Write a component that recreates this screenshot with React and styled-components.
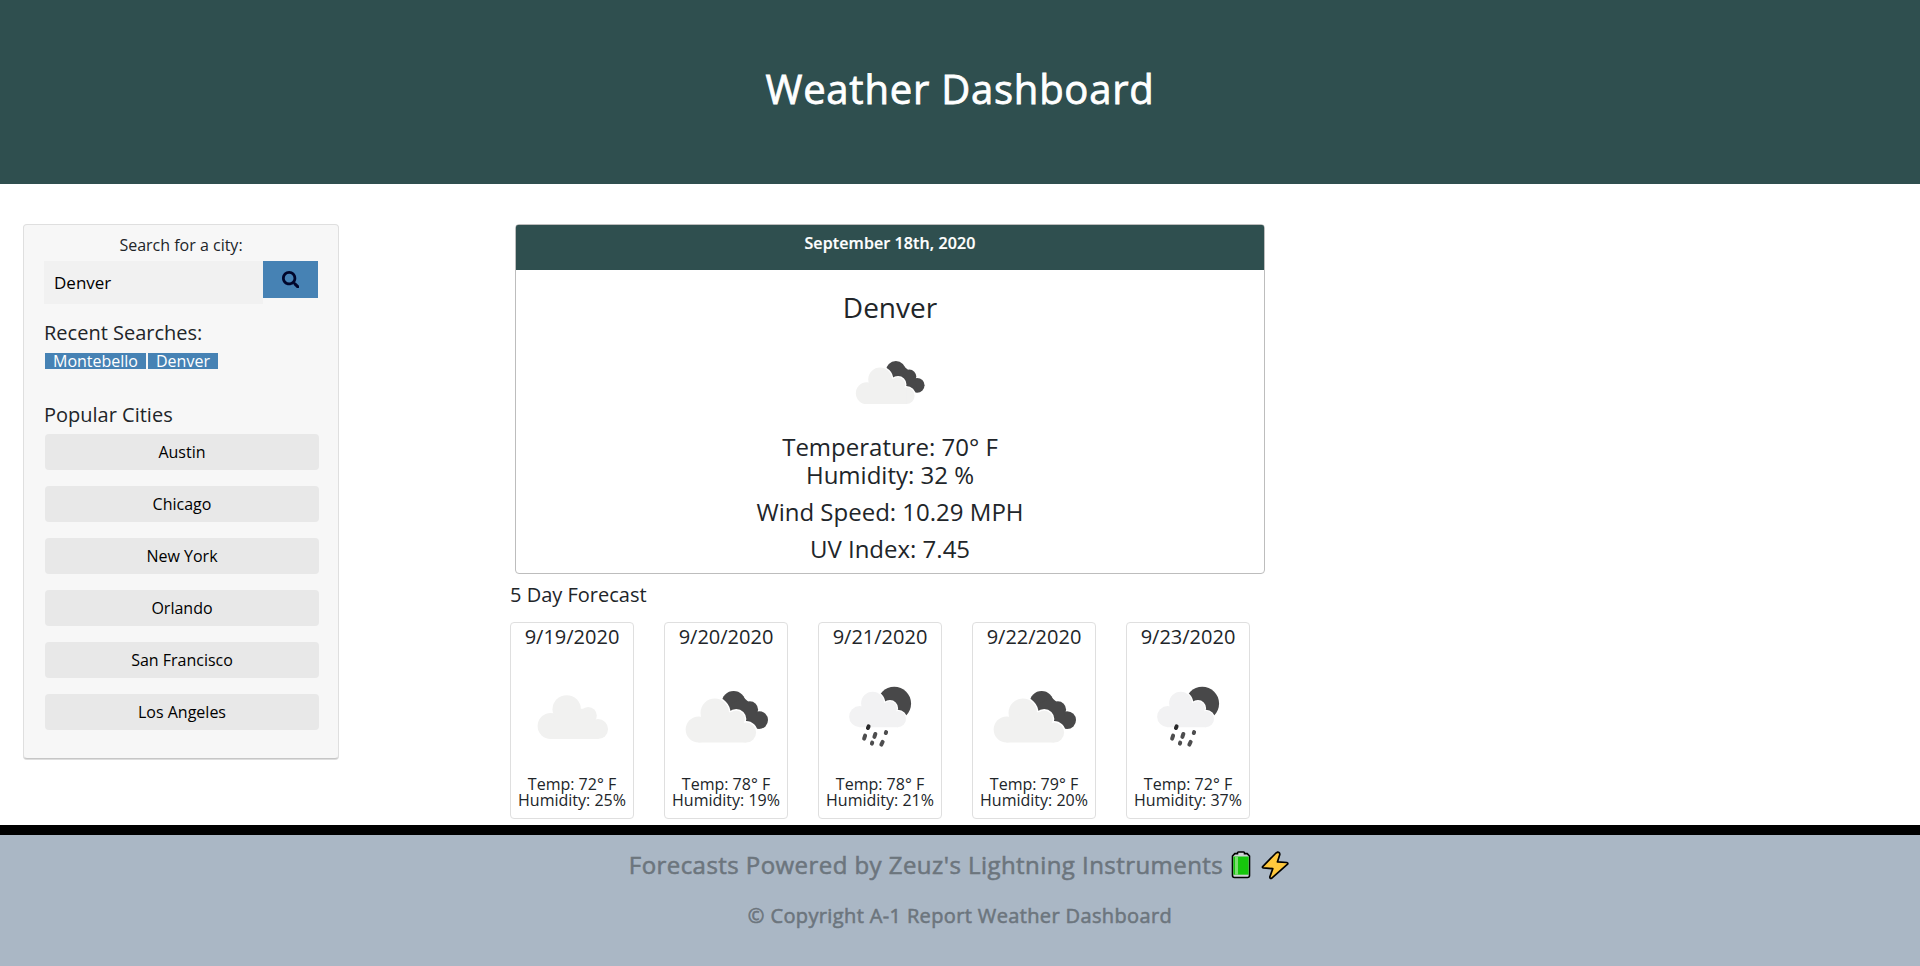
import React from "react";
import styled, { createGlobalStyle } from "styled-components";
import { FaSearch } from "react-icons/fa";

const GlobalStyle = createGlobalStyle`
  *, *::before, *::after { box-sizing: border-box; }
  body {
    margin: 0;
    background: #fff;
    color: #212529;
    font: 400 16px/24px "Open Sans", "Noto Sans", sans-serif;
  }
  button, input { font: inherit; border: 0; margin: 0; }
`;

const Page = styled.div`
  min-height: 966px;
  display: flex;
  flex-direction: column;
`;

const Header = styled.header`
  height: 184px;
  padding-top: 65px;
  background: #2f4f4f;
  text-align: center;
`;

/* Open Sans has no medium weight here, so a thin stroke thickens the regular one. */
const Title = styled.h1`
  margin: 0;
  color: #fff;
  font-size: 40px;
  font-weight: 400;
  line-height: 48px;
  letter-spacing: 0.77px;
  -webkit-text-stroke: 0.8px currentColor;
`;

const Content = styled.main`
  flex: 1;
  display: flex;
  align-items: flex-start;
  padding: 40px 0 0 23px;
`;

const Sidebar = styled.aside`
  width: 316px;
  height: 535px;
  padding: 8px 19px 0 21px;
  background: #f7f7f7;
  border: 1px solid #dfdfdf;
  border-bottom-color: #c6c6c6;
  border-radius: 4px;
  box-shadow: 0 1px 0 #dedede;
`;

const SearchLabel = styled.label`
  display: block;
  margin-bottom: 4px;
  padding-right: 2px;
  text-align: center;
`;

const SearchForm = styled.form`
  display: flex;
  align-items: flex-start;
  margin: 0 0 17px -1px;
`;

const SearchInput = styled.input`
  width: 219px;
  height: 43px;
  padding: 0 10px;
  background: #f1f1f1;
  color: #000;
  font-size: 17px;
  border-radius: 0;
  outline: none;
`;

const SearchButton = styled.button`
  width: 55px;
  height: 37px;
  padding: 0;
  display: flex;
  align-items: center;
  justify-content: center;
  background: #4682b4;
  color: #00062b;
  font-size: 17.6px;
`;

const SubHeading = styled.h5`
  margin: 0 0 ${(p) => p.$gap}px;
  font-size: 20px;
  font-weight: 400;
  line-height: 24px;
`;

const PanelHeading = styled(SubHeading)`
  margin-left: -1px;
`;

const TagList = styled.div`
  display: flex;
  gap: 2px;
  margin-bottom: 34px;
`;

const Tag = styled.button`
  height: 16px;
  padding: 0 8px;
  background: #4682b4;
  color: #fff;
  line-height: 16px;
`;

const CityList = styled.div`
  display: flex;
  flex-direction: column;
  gap: 16px;
`;

const CityButton = styled.button`
  height: 36px;
  padding: 0;
  background: #e8e8e8;
  color: #000;
  border-radius: 4px;
`;

const Report = styled.section`
  width: 755px;
  margin-left: 171px;
`;

const CurrentCard = styled.article`
  width: 750px;
  height: 350px;
  margin-left: 5px;
  border: 1px solid #bdbdbd;
  border-radius: 4px;
  text-align: center;
`;

const CurrentDate = styled.div`
  height: 45px;
  padding-top: 6px;
  background: #2f4f4f;
  color: #fff;
  border-radius: 2px 2px 0 0;
  font-weight: 600;
  letter-spacing: 0.11px;
  -webkit-text-stroke: 0.2px currentColor;
`;

const CurrentCity = styled.h3`
  margin: 20px 0 2px;
  font-size: 28px;
  font-weight: 400;
  line-height: 34px;
`;

const CurrentIcon = styled.div`
  padding-right: 2px;
  margin-bottom: 1px;
`;

const Reading = styled.p`
  margin: 0 0 ${(p) => (p.$tight ? 0 : 9)}px;
  font-size: 24px;
  line-height: 28px;
`;

const ForecastTitle = styled(SubHeading)`
  margin: 9px 0 15px;
`;

const ForecastRow = styled.div`
  display: flex;
  gap: 30px;
`;

const DayCard = styled.article`
  width: 124px;
  height: 197px;
  padding-top: 2px;
  border: 1px solid #dfdfdf;
  border-radius: 4px;
  line-height: 16px;
  text-align: center;
  white-space: nowrap;
`;

const WeatherSvg = styled.svg`
  display: block;
  width: ${(p) => p.$width}px;
  height: ${(p) => p.$height}px;
  margin: 0 auto;
`;

const Footer = styled.footer`
  height: 141px;
  padding-top: 15px;
  border-top: 10px solid #000;
  background: #aab7c5;
  color: #6c757d;
  -webkit-text-stroke: 0.55px currentColor;
`;

const PoweredBy = styled.div`
  display: flex;
  justify-content: center;
  align-items: center;
  gap: 6px;
  margin-bottom: 24px;
  font-size: 24px;
  line-height: 30px;
  letter-spacing: 0.44px;
`;

const Copyright = styled.div`
  font-size: 20px;
  line-height: 24px;
  letter-spacing: 0.37px;
  text-align: center;
`;

/* The white outline separates the front cloud from whatever is behind it. */
function FrontCloud({ color = "#f1f1f0" }) {
  const shapes = (
    <>
      <circle cx="595.5" cy="507.5" r="39.5" />
      <circle cx="644" cy="457" r="43" />
      <circle cx="709" cy="476" r="26" />
      <circle cx="738.5" cy="516.5" r="30.5" />
      <path d="M595 547H739V490H709V455H644L595 490Z" />
    </>
  );
  return (
    <>
      <g fill="#fff" stroke="#fff" strokeWidth="9">{shapes}</g>
      <g fill={color}>{shapes}</g>
    </>
  );
}

function BrokenClouds() {
  return (
    <>
      <g fill="#484849">
        <circle cx="701" cy="427" r="36" />
        <circle cx="750" cy="447" r="25" />
        <circle cx="778" cy="479" r="27" />
        <path d="M675 440L730 410L765 440L780 500L765 500Z" />
      </g>
      <FrontCloud />
    </>
  );
}

function CloudOnly() {
  return (
    <g transform="translate(-444 -10.5)">
      <FrontCloud />
    </g>
  );
}

function RainShower() {
  return (
    <>
      <circle cx="967" cy="429" r="51" fill="#484849" />
      <path d="M940 470H990L1003 464V510H940Z" fill="#fff" />
      <g transform="translate(382 59) scale(0.807)">
        <FrontCloud color="#f2f2f3" />
      </g>
      <g stroke="#4d4d4e" strokeWidth="12" strokeLinecap="round">
        <path d="M889.5 498L887.5 503" stroke="#29292a" />
        <path d="M879 526L876 535" />
        <path d="M910 521L907 530" />
        <path d="M942.5 515L941.5 518" />
        <path d="M900.5 547L899.5 550" />
        <path d="M932 545L928 553" />
      </g>
    </>
  );
}

const ICONS = {
  broken: { box: "495 264 366 384", Shape: BrokenClouds },
  cloud: { box: "33 264 366 384", Shape: CloudOnly },
  rain: { box: "741 264 366 384", Shape: RainShower },
};

function WeatherIcon({ kind, width, height }) {
  const { box, Shape } = ICONS[kind];
  return (
    <WeatherSvg viewBox={box} $width={width} $height={height} aria-hidden="true">
      <Shape />
    </WeatherSvg>
  );
}

function BatteryIcon() {
  return (
    <svg width="24" height="30" viewBox="0 0 24 30" aria-hidden="true">
      <path d="M8.5 3.6V2.8Q8.5 2 9.5 2H14.5Q15.5 2 15.5 2.8V3.6H18.2L20.5 6V25.5Q20.5 27.5 18.5 27.5H5.5Q3.5 27.5 3.5 25.5V6L5.8 3.6Z" fill="#cfd3d6" stroke="#000" strokeWidth="1.6" />
      <rect x="4.4" y="6.5" width="15.2" height="18.2" fill="#16c60c" />
      <rect x="6" y="6.5" width="3" height="18.2" fill="#7cdc70" />
    </svg>
  );
}

function BoltIcon() {
  return (
    <svg width="32" height="30" viewBox="-1 -1 32 30" aria-hidden="true">
      <path d="M16 2L2.7 15.6Q2 16.6 3.2 16.9L12.8 17.6L9.8 26Q9.8 28 11.8 27.2L27.6 13.2Q28.3 12 26.8 11.5L17.4 10.9L19.8 3.4Q19.8 1 17.4 1.2Z" fill="#ffc83d" stroke="#000" strokeWidth="1.7" strokeLinejoin="round" />
    </svg>
  );
}

const recent = ["Montebello", "Denver"];
const popular = ["Austin", "Chicago", "New York", "Orlando", "San Francisco", "Los Angeles"];
const days = [
  { date: "9/19/2020", icon: "cloud", temp: 72, humidity: 25 },
  { date: "9/20/2020", icon: "broken", temp: 78, humidity: 19 },
  { date: "9/21/2020", icon: "rain", temp: 78, humidity: 21 },
  { date: "9/22/2020", icon: "broken", temp: 79, humidity: 20 },
  { date: "9/23/2020", icon: "rain", temp: 72, humidity: 37 },
];

export default function App() {
  return (
    <Page>
      <GlobalStyle />
      <Header>
        <Title>Weather Dashboard</Title>
      </Header>
      <Content>
        <Sidebar>
          <SearchLabel htmlFor="city">Search for a city:</SearchLabel>
          <SearchForm onSubmit={(e) => e.preventDefault()}>
            <SearchInput id="city" defaultValue="Denver" />
            <SearchButton aria-label="Search">
              <FaSearch />
            </SearchButton>
          </SearchForm>
          <PanelHeading $gap={8}>Recent Searches:</PanelHeading>
          <TagList>
            {recent.map((c) => (
              <Tag key={c}>{c}</Tag>
            ))}
          </TagList>
          <PanelHeading $gap={7}>Popular Cities</PanelHeading>
          <CityList>
            {popular.map((c) => (
              <CityButton key={c}>{c}</CityButton>
            ))}
          </CityList>
        </Sidebar>
        <Report>
          <CurrentCard>
            <CurrentDate>September 18th, 2020</CurrentDate>
            <CurrentCity>Denver</CurrentCity>
            <CurrentIcon>
              <WeatherIcon kind="broken" width={101} height={106} />
            </CurrentIcon>
            <Reading $tight>Temperature: 70° F</Reading>
            <Reading>Humidity: 32 %</Reading>
            <Reading>Wind Speed: 10.29 MPH</Reading>
            <Reading>UV Index: 7.45</Reading>
          </CurrentCard>
          <ForecastTitle>5 Day Forecast</ForecastTitle>
          <ForecastRow>
            {days.map((d) => (
              <DayCard key={d.date}>
                <SubHeading $gap={0}>{d.date}</SubHeading>
                <WeatherIcon kind={d.icon} width={122} height={127} />
                <div>Temp: {d.temp}° F</div>
                <div>Humidity: {d.humidity}%</div>
              </DayCard>
            ))}
          </ForecastRow>
        </Report>
      </Content>
      <Footer>
        <PoweredBy>
          <span>Forecasts Powered by Zeuz's Lightning Instruments</span>
          <BatteryIcon />
          <BoltIcon />
        </PoweredBy>
        <Copyright>© Copyright A-1 Report Weather Dashboard</Copyright>
      </Footer>
    </Page>
  );
}
